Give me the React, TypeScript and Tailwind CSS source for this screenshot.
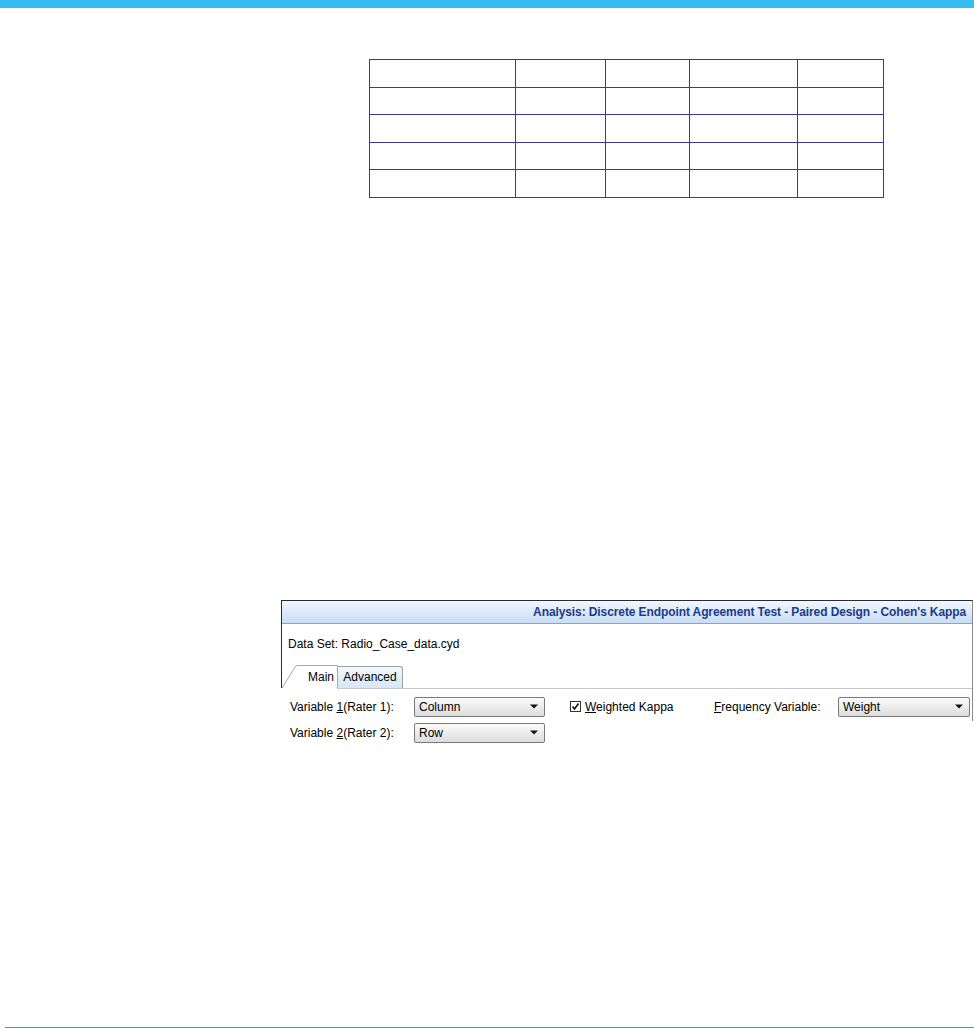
import React from "react";

const font = { fontFamily: '"Liberation Sans", Arial, sans-serif' };

function Select({ value, w }: { value: string; w: string }) {
  return (
    <div
      className={`${w} h-[20px] flex items-center justify-between border border-[#7a7a7a] rounded-[2px] bg-gradient-to-b from-[#fbfbfb] via-[#ececec] to-[#dcdcdc] pl-[4px] pr-[6px] text-[12px] text-black`}
    >
      <span>{value}</span>
      <svg width="8" height="5" viewBox="0 0 8 5">
        <path d="M0 0.5 H8 L4 4.5 Z" fill="#111" />
      </svg>
    </div>
  );
}

export default function App() {
  const widths = ["w-[146px]", "w-[90px]", "w-[84px]", "w-[108px]", "w-[86px]"];
  return (
    <div className="w-[974px] h-[1028px] bg-white flex flex-col" style={font}>
      <div className="h-[8px] w-full bg-[#35bdf2]" />

      <table className="self-start mt-[51px] ml-[369px] w-[515px] table-fixed border-collapse">
        <tbody>
          {[0, 1, 2, 3, 4].map((r) => (
            <tr key={r}>
              {widths.map((w, c) => (
                <td key={c} className={`${w} h-[27.5px] border border-[#42349c] p-0`} />
              ))}
            </tr>
          ))}
        </tbody>
      </table>

      <div className="mt-[402px] ml-[281px] w-[692px] h-[121px] border-t border-r border-t-[#2a2a2a] border-r-[#8a8a8a]">
        <div className="border-l border-[#2a2a2a]">
          <div className="h-[23px] border-b border-[#7fa7de] bg-gradient-to-b from-[#f1f7fe] to-[#c8ddf7] flex items-center justify-end pr-[6px]">
            <span className="text-[12px] font-bold text-[#1d3a86] tracking-[-0.1px]">
              Analysis: Discrete Endpoint Agreement Test - Paired Design - Cohen's Kappa
            </span>
          </div>
          <div className="pt-[13px] pl-[6px] h-[41px] text-[12px] text-black leading-[14px]">
            Data Set: Radio_Case_data.cyd
          </div>
          <div className="flex items-end h-[23px]">
            <div className="relative w-[56px] h-[23px]">
              <svg className="absolute inset-0" width="56" height="23" viewBox="0 0 56 23">
                <path d="M0 23 L13 2 Q14 0.5 16 0.5 H55.5 V23" fill="#fff" stroke="#a8a8a8" strokeWidth="1" />
              </svg>
              <span className="absolute left-[26px] top-[3px] text-[12px] text-black">Main</span>
            </div>
            <div className="h-[22px] w-[65px] border border-l-0 border-b-0 border-[#a0a0a0] rounded-tr-[3px] bg-gradient-to-b from-[#f4f8fd] to-[#d7e6f8] flex items-start justify-center pt-[1px] text-[12px] text-black">
              Advanced
            </div>
          </div>
        </div>
        <div className="h-px bg-[#c8c8c8] ml-[56px]" />
        <div className="pl-[9px] pt-[8px] flex flex-col gap-[6px] text-[12px] text-black">
          <div className="flex items-center">
            <span className="w-[124px]">
              Variable <u>1</u>(Rater 1):
            </span>
            <Select value="Column" w="w-[131px]" />
            <div className="ml-[25px] w-[144px] flex items-center gap-[4px]">
              <svg width="11" height="11" viewBox="0 0 11 11">
                <rect x="0.5" y="0.5" width="10" height="10" fill="#fff" stroke="#333" />
                <path d="M2.5 5.5 L4.5 8 L8.5 2.5" fill="none" stroke="#111" strokeWidth="1.6" />
              </svg>
              <span>
                <u>W</u>eighted Kappa
              </span>
            </div>
            <span className="w-[124px]">
              <u>F</u>requency Variable:
            </span>
            <Select value="Weight" w="w-[132px]" />
          </div>
          <div className="flex items-center">
            <span className="w-[124px]">
              Variable <u>2</u>(Rater 2):
            </span>
            <Select value="Row" w="w-[131px]" />
          </div>
        </div>
      </div>

      <div className="mt-auto ml-[5px] h-px bg-[#1ea3de]" />
    </div>
  );
}
